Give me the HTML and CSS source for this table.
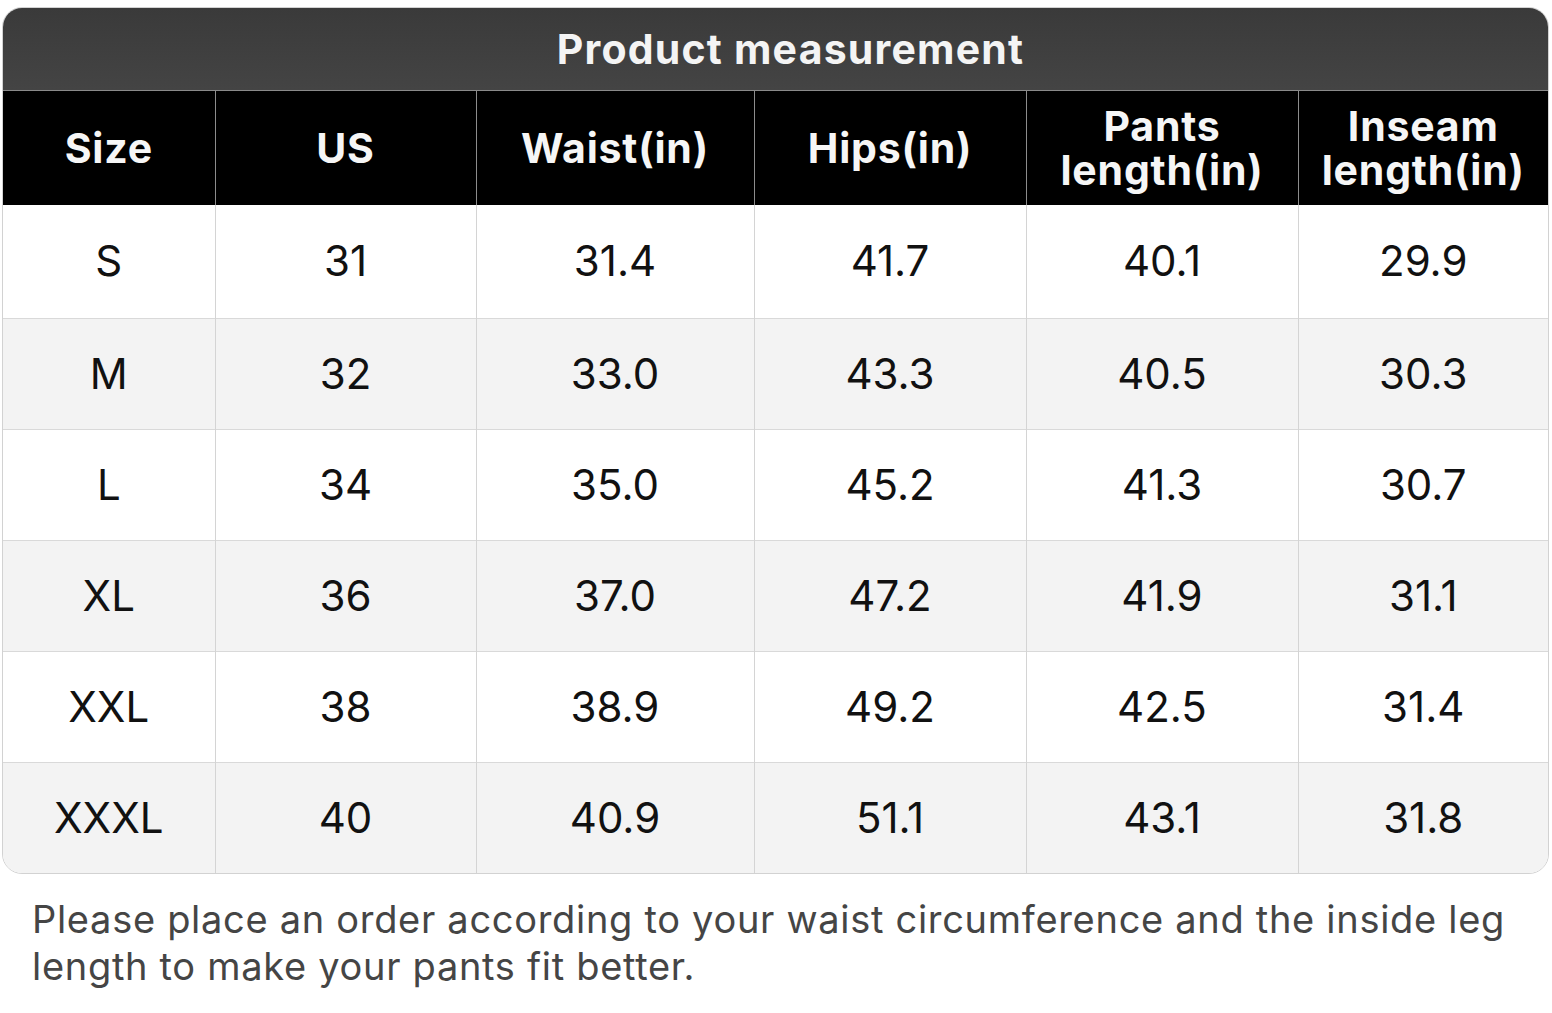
FILE: index.html
```html
<!DOCTYPE html>
<html lang="en">
<head>
<meta charset="utf-8">
<title>Product measurement</title>
<link rel="stylesheet" href="styles.css">
</head>
<body>
<main class="page">
  <section class="card">
    <h1 class="card-title">Product measurement</h1>
    <table class="size-table">
      <colgroup>
        <col class="c1"><col class="c2"><col class="c3"><col class="c4"><col class="c5"><col class="c6">
      </colgroup>
      <thead>
        <tr>
          <th>Size</th>
          <th>US</th>
          <th>Waist(in)</th>
          <th>Hips(in)</th>
          <th><span class="line">Pants</span><span class="line">length(in)</span></th>
          <th><span class="line">Inseam</span><span class="line">length(in)</span></th>
        </tr>
      </thead>
      <tbody>
        <tr><td>S</td><td>31</td><td>31.4</td><td>41.7</td><td>40.1</td><td>29.9</td></tr>
        <tr><td>M</td><td>32</td><td>33.0</td><td>43.3</td><td>40.5</td><td>30.3</td></tr>
        <tr><td>L</td><td>34</td><td>35.0</td><td>45.2</td><td>41.3</td><td>30.7</td></tr>
        <tr><td>XL</td><td>36</td><td>37.0</td><td>47.2</td><td>41.9</td><td>31.1</td></tr>
        <tr><td>XXL</td><td>38</td><td>38.9</td><td>49.2</td><td>42.5</td><td>31.4</td></tr>
        <tr><td>XXXL</td><td>40</td><td>40.9</td><td>51.1</td><td>43.1</td><td>31.8</td></tr>
      </tbody>
    </table>
  </section>
  <p class="note">Please place an order according to your waist circumference and the inside leg length to make your pants fit better.</p>
</main>
</body>
</html>
```
FILE: styles.css
```css
html, body {
  margin: 0;
  padding: 0;
  background: #ffffff;
}

body {
  font-family: Inter, Roboto, "Liberation Sans", Arial, sans-serif;
  color: #111;
}

.page {
  padding: 7px 3px 0 2px;
}

.card {
  border: 1px solid #d2d2d2;
  border-radius: 20px;
  overflow: hidden;
  background: #fff;
}

.card-title {
  margin: 0;
  height: 82px;
  padding-left: 30px;
  display: flex;
  align-items: center;
  justify-content: center;
  background: linear-gradient(#3a3a3a, #444444);
  color: #f4f4f4;
  font-size: 41px;
  font-weight: 700;
  letter-spacing: 1.2px;
  border-bottom: 1px solid #8a8a8a;
}

.size-table {
  width: 100%;
  border-collapse: collapse;
  table-layout: fixed;
}

.c1 { width: 212px; }
.c2 { width: 261px; }
.c3 { width: 278px; }
.c4 { width: 272px; }
.c5 { width: 272px; }
.c6 { width: auto; }

.size-table th {
  background: #000;
  color: #f6f6f6;
  font-size: 41px;
  font-weight: 700;
  letter-spacing: 0.8px;
  line-height: 44px;
  height: 114px;
  padding: 0;
  border-left: 1px solid #8c8c8c;
}

.line {
  display: block;
}

.size-table td {
  text-align: center;
  font-size: 42px;
  font-weight: 400;
  height: 108px;
  padding: 0 0 2px;
  border-left: 1px solid #d4d4d4;
  border-top: 1px solid #d9d9d9;
  color: #111;
}

.size-table th:first-child,
.size-table td:first-child {
  border-left: none;
}

.size-table tbody tr:nth-child(even) td {
  background: #f3f3f3;
}

.size-table tbody tr:first-child td {
  border-top: none;
  height: 111px;
}

.note {
  margin: 22px 0 0 30px;
  padding-right: 20px;
  font-size: 38px;
  letter-spacing: 0.7px;
  line-height: 47px;
  color: #454545;
}
```
